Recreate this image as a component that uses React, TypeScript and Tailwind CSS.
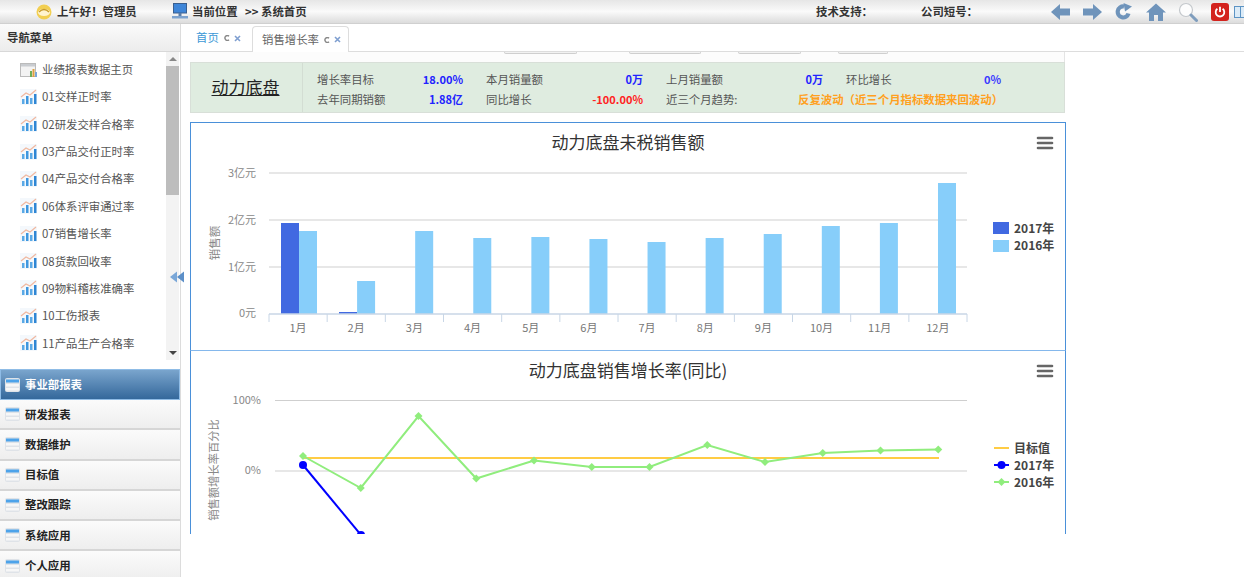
const font = "font-['Noto_Sans_CJK_SC','Liberation_Sans',sans-serif]";

const menuItems = [
  "业绩报表数据主页",
  "01交样正时率",
  "02研发交样合格率",
  "03产品交付正时率",
  "04产品交付合格率",
  "06体系评审通过率",
  "07销售增长率",
  "08货款回收率",
  "09物料稽核准确率",
  "10工伤报表",
  "11产品生产合格率",
];

const sections = ["研发报表", "数据维护", "目标值", "整改跟踪", "系统应用", "个人应用"];
const months = ["1月", "2月", "3月", "4月", "5月", "6月", "7月", "8月", "9月", "10月", "11月", "12月"];

const bars2016 = [231, 281, 231, 238, 237, 239, 242, 238, 234, 226, 223, 183];
const growth2016 = [456, 488, 416, 478.5, 460.5, 467, 467, 445, 462, 453, 450.5, 449.5];

const slotX = (i: number) => 269 + i * 58.17;
const barX = (i: number) => 299 + i * 58.09;
const pointX = (i: number) => 303 + i * 57.75;

function ChartIcon() {
  return (
    <svg width="17" height="16" viewBox="0 0 17 16" className="shrink-0">
      <rect x="0" y="0" width="17" height="16" fill="#f4f8fc" />
      <path d="M1 8 L6 4 L10 6 L16 1" stroke="#f0b8a0" strokeWidth="1.2" fill="none" />
      <rect x="2" y="10" width="2.5" height="5" fill="#5aa9e6" />
      <rect x="6" y="7" width="2.5" height="8" fill="#3f97df" />
      <rect x="10" y="9" width="2.5" height="6" fill="#5aa9e6" />
      <rect x="14" y="5" width="2.5" height="10" fill="#2f86d4" />
    </svg>
  );
}

function PageIcon() {
  return (
    <svg width="17" height="16" viewBox="0 0 17 16" className="shrink-0">
      <rect x="0.5" y="1.5" width="15" height="13" fill="#f3f3f3" stroke="#bbb" />
      <rect x="1" y="2" width="14" height="2.5" fill="#c9ccd0" />
      <rect x="10" y="9" width="2" height="6" fill="#6fae5a" />
      <rect x="12.5" y="7" width="2" height="8" fill="#e0a040" />
      <rect x="15" y="10" width="2" height="5" fill="#7aa7d8" />
    </svg>
  );
}

function SectionIcon() {
  return (
    <svg width="15" height="14" viewBox="0 0 15 14" className="shrink-0">
      <rect x="0" y="0" width="15" height="14" rx="2" fill="#dfe3e8" />
      <rect x="1" y="1.5" width="13" height="3" fill="#4da3ea" />
      <rect x="1" y="6" width="13" height="2.5" fill="#f7f7f7" />
      <rect x="1" y="10" width="13" height="2.5" fill="#f7f7f7" />
    </svg>
  );
}

function NavArrow({ flip }: { flip?: boolean }) {
  return (
    <svg width="19" height="16" viewBox="0 0 19 16" className={`shrink-0 ${flip ? "scale-x-[-1]" : ""}`}>
      <path d="M0 8 L9 0 V4.5 H19 V11.5 H9 V16 Z" fill="#6f94bb" />
    </svg>
  );
}

function HeaderIcons() {
  return (
    <div className="ml-[75px] flex shrink-0 items-center">
      <NavArrow />
      <div className="ml-[13px]">
        <NavArrow flip />
      </div>
      <svg width="18" height="17" viewBox="0 0 18 17" className="ml-[13px] shrink-0">
        <path d="M13.5 10.5 A5.5 5.5 0 1 1 9 3.5" stroke="#6f94bb" strokeWidth="4.2" fill="none" />
        <path d="M8.5 0 L17 3.5 L10 8.5 Z" fill="#6f94bb" />
      </svg>
      <svg width="20" height="18" viewBox="0 0 20 18" className="ml-[13px] shrink-0">
        <path d="M10 0.5 L20 9.5 H17 V18 H12 V12 H8 V18 H3 V9.5 H0 Z" fill="#6f94bb" />
      </svg>
      <svg width="20" height="20" viewBox="0 0 20 20" className="ml-[12px] shrink-0">
        <circle cx="8" cy="8" r="6.5" fill="#fdfdfd" stroke="#c4c8cc" strokeWidth="1.2" />
        <path d="M13 13 L18.5 18.5" stroke="#7f9dbd" strokeWidth="3" strokeLinecap="round" />
      </svg>
      <div className="ml-[13px] flex h-[18px] w-[18px] shrink-0 items-center justify-center rounded-[3px] bg-[#d3231e]">
        <svg width="12" height="12" viewBox="0 0 12 12">
          <path d="M3.4 2.8 A4.3 4.3 0 1 0 8.6 2.8" stroke="#fff" strokeWidth="1.8" fill="none" />
          <path d="M6 0.8 V6" stroke="#fff" strokeWidth="1.8" />
        </svg>
      </div>
      <svg width="14" height="14" viewBox="0 0 14 14" className="ml-[5px] shrink-0">
        <rect x="0.5" y="1.5" width="6" height="11" fill="#dcebf7" stroke="#5d94c4" />
        <rect x="6.5" y="1.5" width="7" height="11" fill="#dcebf7" stroke="#5d94c4" />
      </svg>
    </div>
  );
}

function TopBar() {
  return (
    <header className="flex h-[24px] shrink-0 items-center overflow-hidden border-b border-[#d0d0d0] bg-gradient-to-b from-[#e6e6e6] via-[#fafafa] to-[#dcdcdc] pl-[36px] text-[11.4px] font-bold text-[#333]">
      <svg width="16" height="16" viewBox="0 0 16 16" className="shrink-0">
        <circle cx="8" cy="8" r="7.5" fill="#f2cf52" />
        <ellipse cx="8" cy="8.5" rx="6" ry="3.5" fill="#fff4cf" />
        <path d="M3 8 Q8 3 13 8" stroke="#c79a2a" strokeWidth="1.2" fill="none" />
      </svg>
      <span className="ml-[5px] w-[79px] shrink-0 whitespace-nowrap">上午好！管理员</span>
      <svg width="16" height="17" viewBox="0 0 16 17" className="ml-[36px] shrink-0">
        <rect x="1.5" y="0.5" width="13" height="9.5" fill="#3f86d8" stroke="#3a5f8f" />
        <rect x="6.5" y="10" width="3" height="3" fill="#5a7da8" />
        <rect x="0" y="13" width="16" height="2.5" fill="#7da3cf" />
      </svg>
      <span className="ml-[4px] w-[53px] shrink-0 whitespace-nowrap">当前位置</span>
      <span className="w-[66px] shrink-0 whitespace-nowrap">&gt;&gt; 系统首页</span>
      <span className="ml-[505px] w-[105px] shrink-0 whitespace-nowrap">技术支持：</span>
      <span className="w-[55px] shrink-0 whitespace-nowrap">公司短号：</span>
      <HeaderIcons />
    </header>
  );
}

function Sidebar() {
  return (
    <aside className="relative flex w-[181px] shrink-0 flex-col border-r border-[#dcdcdc] bg-white">
      <div className="flex h-[28px] shrink-0 items-center border-b border-[#d8d8d8] bg-gradient-to-b from-[#fbfbfb] to-[#ececec] pt-[1px] pl-[7px] text-[11.4px] font-bold text-[#333]">
        导航菜单
      </div>
      <div className="flex h-[308px] shrink-0">
        <ul className="flex-1 pt-[4px]">
          {menuItems.map((item, i) => (
            <li key={item} className="flex h-[27.35px] items-center gap-[5px] pl-[20px] text-[11.4px] whitespace-nowrap text-[#555]">
              {i === 0 ? <PageIcon /> : <ChartIcon />}
              <span>{item}</span>
            </li>
          ))}
        </ul>
        <div className="mr-[1px] flex w-[13px] flex-col bg-[#f3f3f3]">
          <div className="flex h-[14px] items-center justify-center">
            <div className="h-0 w-0 border-x-[4px] border-b-[4px] border-x-transparent border-b-[#888]" />
          </div>
          <div className="h-[129px] bg-[#bdbdbd]" />
          <div className="flex-1" />
          <div className="flex h-[14px] items-center justify-center">
            <div className="h-0 w-0 border-x-[4px] border-t-[4px] border-x-transparent border-t-[#444]" />
          </div>
        </div>
      </div>
      <div className="mt-[9px] flex h-[31px] shrink-0 items-center gap-[5px] border border-[#8fbce6] bg-gradient-to-b from-[#7aa5cd] to-[#34689b] pl-[4px] text-[11.4px] font-bold text-white">
        <SectionIcon />
        事业部报表
      </div>
      {sections.map((s) => (
        <div
          key={s}
          className="flex h-[30.3px] shrink-0 items-center gap-[5px] border-b-2 border-[#d6d6d6] bg-gradient-to-b from-[#fbfbfb] to-[#eeeeee] pl-[5px] text-[11.4px] font-bold text-[#222]"
        >
          <SectionIcon />
          {s}
        </div>
      ))}
      <svg width="15" height="12" viewBox="0 0 15 12" className="absolute top-[247px] left-[170px]">
        <path d="M0 6 L7 0.5 V11.5 Z" fill="#7aa7d8" />
        <path d="M7 6 L14 0.5 V11.5 Z" fill="#5c8fc8" />
      </svg>
    </aside>
  );
}

function TabMarks() {
  return (
    <span className="ml-[5px] flex shrink-0 items-center gap-[4px]">
      <svg width="6" height="6" viewBox="0 0 6 6">
        <path d="M5 1.2 A2.4 2.4 0 1 0 5 4.8" stroke="#888" strokeWidth="1.4" fill="none" />
      </svg>
      <svg width="7" height="7" viewBox="0 0 7 7">
        <path d="M1 1 L6 6 M6 1 L1 6" stroke="#7f9fd0" strokeWidth="1.6" />
      </svg>
    </span>
  );
}

function Tabs() {
  return (
    <div className="flex h-[28px] shrink-0 items-end border-b border-[#dddddd] pl-[15px] text-[11.4px]">
      <div className="flex h-[26px] w-[56px] shrink-0 items-center whitespace-nowrap text-[#3c98d6]">
        首页
        <TabMarks />
      </div>
      <div className="-mb-px flex h-[26px] w-[97px] shrink-0 items-center rounded-t-[4px] border border-b-0 border-[#dddddd] bg-white pl-[9px] whitespace-nowrap text-[#666]">
        销售增长率
        <TabMarks />
      </div>
    </div>
  );
}

function Stat({ label, value, color }: { label: string; value: string; color: string }) {
  return (
    <div className="flex items-center justify-between">
      <span className="text-[#555]">{label}</span>
      <span className={`text-[11px] font-bold ${color}`}>{value}</span>
    </div>
  );
}

function SummaryTable() {
  return (
    <div className="flex h-[51px] w-[875px] items-stretch border border-[#d8dfd8] bg-[#dfece0] text-[11.4px]">
      <div className="flex w-[112px] shrink-0 items-center justify-center border-r border-[#d3ddd3] pr-[2px] pb-[2px] text-[17px] text-[#222] underline">
        动力底盘
      </div>
      <div className="grid grid-cols-[146px_157px_157px_155px] content-center gap-x-[23px] gap-y-[2px] pt-[3px] pl-[14px] leading-[18px]">
        <Stat label="增长率目标" value="18.00%" color="text-[#2222ff]" />
        <Stat label="本月销量额" value="0万" color="text-[#2222ff]" />
        <Stat label="上月销量额" value="0万" color="text-[#2222ff]" />
        <Stat label="环比增长" value="0%" color="text-[#3a3aff]" />
        <Stat label="去年同期销额" value="1.88亿" color="text-[#2222ff]" />
        <Stat label="同比增长" value="-100.00%" color="text-[#ff2222]" />
        <div className="col-span-2 flex items-center">
          <span className="w-[132px] shrink-0 text-[#555]">近三个月趋势:</span>
          <span className="text-[11.4px] font-bold whitespace-nowrap text-[#ffa020]">反复波动（近三个月指标数据来回波动）</span>
        </div>
      </div>
    </div>
  );
}

function Hamburger({ y }: { y: number }) {
  return (
    <g stroke="#666" strokeWidth="2.6" strokeLinecap="round">
      <path d={`M1038 ${y} H1052`} />
      <path d={`M1038 ${y + 5} H1052`} />
      <path d={`M1038 ${y + 10} H1052`} />
    </g>
  );
}

function SalesChart() {
  const ticks = [
    { y: 173, label: "3亿元" },
    { y: 220, label: "2亿元" },
    { y: 267, label: "1亿元" },
    { y: 313, label: "0元" },
  ];
  return (
    <div className="h-[228px] w-[876px] border-x border-t border-[#4a90d9]">
      <svg viewBox="191 123 874 227" width="874" height="227" className={`block ${font}`}>
        <text x="628" y="149" textAnchor="middle" fontSize="17" fill="#333">动力底盘未税销售额</text>
        <Hamburger y={138} />
        {ticks.slice(0, 3).map((t) => (
          <line key={t.y} x1="269" x2="967" y1={t.y} y2={t.y} stroke="#dfdfdf" strokeWidth="1.5" />
        ))}
        {ticks.map((t) => (
          <text key={t.label} x="256" y={t.y + 4} textAnchor="end" fontSize="11" fill="#888">{t.label}</text>
        ))}
        <text x="219" y="243" textAnchor="middle" fontSize="11.5" fill="#888" transform="rotate(-90 219 243)">销售额</text>
        <rect x="281" y="223" width="18" height="91" fill="#4169e1" />
        <rect x="339" y="312" width="18" height="2" fill="#4169e1" />
        {bars2016.map((top, i) => (
          <rect key={i} x={barX(i)} y={top} width="18" height={314 - top} fill="#87cefa" />
        ))}
        <line x1="269" x2="967" y1="314" y2="314" stroke="#c8d6e6" strokeWidth="1.5" />
        {months.map((m, i) => (
          <g key={m}>
            <line x1={slotX(i)} x2={slotX(i)} y1="314" y2="322" stroke="#c8d6e6" />
            <text x={slotX(i) + 29} y="332" textAnchor="middle" fontSize="11" fill="#777">{m}</text>
          </g>
        ))}
        <line x1="967" x2="967" y1="314" y2="322" stroke="#c8d6e6" />
        <rect x="993" y="222" width="16" height="12" fill="#4169e1" />
        <text x="1014" y="233" fontSize="12" fontWeight="700" fill="#444">2017年</text>
        <rect x="993" y="240" width="16" height="12" fill="#87cefa" />
        <text x="1014" y="250" fontSize="12" fontWeight="700" fill="#444">2016年</text>
      </svg>
    </div>
  );
}

function GrowthChart() {
  const green = growth2016.map((y, i) => `${pointX(i)},${y}`).join(" ");
  return (
    <div className="h-[184px] w-[876px] border-x border-t border-x-[#4a90d9] border-t-[#85b8ec]">
      <svg viewBox="191 351 874 183" width="874" height="183" className={`block ${font}`}>
        <text x="628" y="377" textAnchor="middle" fontSize="17" fill="#333">动力底盘销售增长率(同比)</text>
        <Hamburger y={366} />
        <line x1="275" x2="967" y1="400.5" y2="400.5" stroke="#cfcfcf" strokeWidth="1.2" />
        <line x1="275" x2="967" y1="471" y2="471" stroke="#cfcfcf" strokeWidth="1.2" />
        <text x="261" y="404" textAnchor="end" fontSize="11" fill="#888">100%</text>
        <text x="261" y="474" textAnchor="end" fontSize="11" fill="#888">0%</text>
        <text x="218" y="470" textAnchor="middle" fontSize="11.3" fill="#888" transform="rotate(-90 218 470)">销售额增长率百分比</text>
        <line x1="303" x2="939" y1="458" y2="458" stroke="#ffcc44" strokeWidth="2" />
        <polyline points={green} fill="none" stroke="#90ed7d" strokeWidth="2" />
        {growth2016.map((y, i) => (
          <path key={i} d={`M${pointX(i)} ${y - 4} L${pointX(i) + 4} ${y} L${pointX(i)} ${y + 4} L${pointX(i) - 4} ${y} Z`} fill="#90ed7d" />
        ))}
        <line x1="303" y1="465" x2="361" y2="535" stroke="#0000ff" strokeWidth="2" />
        <circle cx="303" cy="465" r="4" fill="#0000ff" />
        <circle cx="361" cy="535" r="4" fill="#0000ff" />
        <line x1="994" x2="1009" y1="448" y2="448" stroke="#ffcc44" strokeWidth="2" />
        <text x="1014" y="453" fontSize="12" fontWeight="700" fill="#444">目标值</text>
        <line x1="994" x2="1009" y1="465" y2="465" stroke="#0000ff" strokeWidth="2" />
        <circle cx="1001.5" cy="465" r="4" fill="#0000ff" />
        <text x="1014" y="470" fontSize="12" fontWeight="700" fill="#444">2017年</text>
        <line x1="994" x2="1009" y1="482" y2="482" stroke="#90ed7d" strokeWidth="2" />
        <path d="M1001.5 478 L1005.5 482 L1001.5 486 L997.5 482 Z" fill="#90ed7d" />
        <text x="1014" y="487" fontSize="12" fontWeight="700" fill="#444">2016年</text>
      </svg>
    </div>
  );
}

function ClippedButtons() {
  const widths = [
    { w: "w-[73px]", ml: "ml-[314px]" },
    { w: "w-[72px]", ml: "ml-[52px]" },
    { w: "w-[63px]", ml: "ml-[37px]" },
    { w: "w-[50px]", ml: "ml-[37px]" },
  ];
  return (
    <div className="flex h-[10px] w-[875px] border-r border-[#e4e4e4] bg-[#fcfcfc]">
      {widths.map((b) => (
        <div key={b.ml + b.w} className={`${b.ml} ${b.w} h-[2px] rounded-b-[2px] border-x border-b border-[#cfcfcf] bg-[#f2f2f2]`} />
      ))}
    </div>
  );
}

export default function App() {
  return (
    <div className={`flex h-[577px] w-[1244px] flex-col overflow-hidden bg-white ${font}`}>
      <TopBar />
      <div className="flex min-h-0 flex-1">
        <Sidebar />
        <main className="flex min-w-0 flex-1 flex-col">
          <Tabs />
          <div className="ml-[9px] h-[482px] overflow-hidden">
            <ClippedButtons />
            <SummaryTable />
            <div className="mt-[9px]">
              <SalesChart />
              <GrowthChart />
            </div>
          </div>
        </main>
      </div>
    </div>
  );
}
